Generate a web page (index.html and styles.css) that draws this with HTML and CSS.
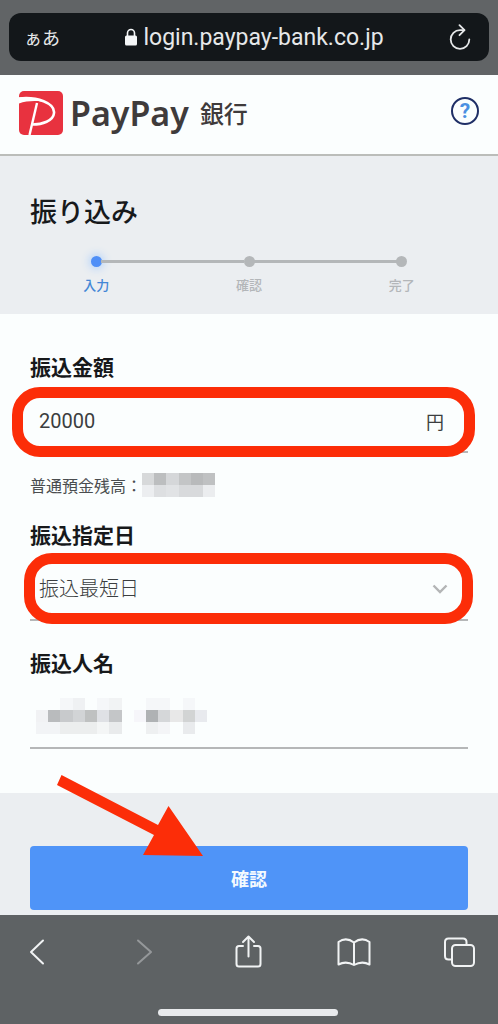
FILE: index.html
```html
<!DOCTYPE html>
<html lang="ja">
  <head>
    <meta charset="UTF-8" />
    <meta name="viewport" content="width=device-width, initial-scale=1.0" />
    <title>振り込み</title>
    <link rel="stylesheet" href="styles.css">
  </head>
  <body>
    <div class="browser-top">
      <div class="address-bar">
        <button type="button" class="text-size">ぁあ</button>
        <div class="url">
          <svg width="12" height="18" viewBox="0 0 12 18">
            <path d="M2.5 8V5a3.5 3.5 0 0 1 7 0v3" fill="none" stroke="#f4f6f7" stroke-width="1.6" />
            <rect x="0" y="7.5" width="12" height="10" rx="1.5" fill="#f4f6f7" />
          </svg>
          <span>login.paypay-bank.co.jp</span>
        </div>
        <button type="button" class="reload" aria-label="再読み込み">
          <svg width="22" height="26" viewBox="0 0 22 26" fill="none" stroke="#e6e8e9" stroke-width="1.8" stroke-linecap="round" stroke-linejoin="round">
            <path d="M15 6.2H11A9.300 9.300 0 1 0 20.300 15.500" />
            <path d="M10.500 1.200L15.500 6.200L10.500 11.200" />
          </svg>
        </button>
      </div>
    </div>

    <header class="header">
      <div class="logo">
        <svg width="44" height="44" viewBox="0 0 44 44">
          <rect width="44" height="44" rx="5" fill="#e8323f" />
          <path d="M0 7.500C18 5.500 36 12 35 22C34.500 30 23 33.500 13.500 33.500" fill="none" stroke="#fff" stroke-width="2.600" />
          <path d="M0 6.500C9 5.500 17 7 23 10.500C15 9.500 7 10 0 12.500Z" fill="#fff" />
          <path d="M18 12L10.500 44" fill="none" stroke="#fff" stroke-width="2.400" />
        </svg>
        <span class="logo-name">PayPay</span>
        <span class="logo-bank">銀行</span>
      </div>
      <button type="button" class="help" aria-label="ヘルプ">?</button>
    </header>

    <section class="hero">
      <h1>振り込み</h1>
      <ol class="steps">
        <li class="active">入力</li>
        <li>確認</li>
        <li>完了</li>
      </ol>
    </section>

    <form class="form">
      <div class="form-body">
        <label for="amount">振込金額</label>
        <div class="field">
          <input type="text" id="amount" value="20000" />
          <span class="unit">円</span>
          <span class="mark mark-amount"></span>
        </div>
        <p class="balance">
          普通預金残高：
          <svg width="73" height="24" viewBox="0 0 6 2" preserveAspectRatio="none" shape-rendering="crispEdges">
            <rect x="0" width="1" height="1" fill="#d7d9da" />
            <rect x="1" width="1" height="1" fill="#bcbebf" />
            <rect x="2" width="1" height="1" fill="#d5d7d9" />
            <rect x="3" width="1" height="1" fill="#c3c5c6" />
            <rect x="4" width="1" height="1" fill="#b8babb" />
            <rect x="5" width="1" height="1" fill="#bfc1c2" />
            <rect x="0" y="1" width="1" height="1" fill="#eceef0" />
            <rect x="1" y="1" width="1" height="1" fill="#dddfe1" />
            <rect x="2" y="1" width="1" height="1" fill="#e1e3e5" />
            <rect x="3" y="1" width="2" height="1" fill="#d8dadc" />
            <rect x="5" y="1" width="1" height="1" fill="#ebedef" />
          </svg>
        </p>

        <label for="date">振込指定日</label>
        <div class="field">
          <select id="date">
            <option>振込最短日</option>
          </select>
          <svg class="chevron" width="16" height="10" viewBox="0 0 16 10">
            <path d="M1.500 1.500L8 8L14.500 1.500" fill="none" stroke="#b3b5b6" stroke-width="2.400" />
          </svg>
          <span class="mark mark-date"></span>
        </div>

        <label for="name" class="label-name">振込人名</label>
        <div class="field">
          <input type="text" id="name" readonly />
          <!-- masked name -->
          <svg class="masked" width="171" height="36" viewBox="0 0 14 3" preserveAspectRatio="none" shape-rendering="crispEdges">
            <g fill="#f5f7f9">
              <rect x="2" width="1" height="1" />
              <rect x="3" width="1" height="1" fill="#eff1f3" />
              <rect x="5" width="1" height="1" />
              <rect x="6" width="1" height="1" fill="#f1f3f4" />
              <rect x="9" width="2" height="1" />
              <rect x="12" width="1" height="1" />
            </g>
            <rect x="0" y="1" width="1" height="1" fill="#f1f2f4" />
            <rect x="1" y="1" width="1" height="1" fill="#b9bbbd" />
            <rect x="2" y="1" width="1" height="1" fill="#c8cacc" />
            <rect x="3" y="1" width="1" height="1" fill="#d2d4d6" />
            <rect x="4" y="1" width="1" height="1" fill="#bfc1c1" />
            <rect x="5" y="1" width="1" height="1" fill="#dfe1e5" />
            <rect x="6" y="1" width="1" height="1" fill="#c4c6c8" />
            <rect x="8" y="1" width="1" height="1" fill="#f6f6fa" />
            <rect x="9" y="1" width="1" height="1" fill="#afb2b4" />
            <rect x="10" y="1" width="1" height="1" fill="#d5d7d9" />
            <rect x="11" y="1" width="1" height="1" fill="#e8e8e8" />
            <rect x="12" y="1" width="1" height="1" fill="#d2d4d4" />
            <rect x="13" y="1" width="1" height="1" fill="#e8eaee" />
            <rect x="0" y="2" width="2" height="1" fill="#f2f4f6" />
            <rect x="2" y="2" width="3" height="1" fill="#eceeee" />
            <rect x="5" y="2" width="1" height="1" fill="#f4f6f6" />
            <rect x="6" y="2" width="1" height="1" fill="#e9ebec" />
            <rect x="9" y="2" width="1" height="1" fill="#eef0f1" />
            <rect x="10" y="2" width="1" height="1" fill="#f4f5f7" />
            <rect x="12" y="2" width="1" height="1" fill="#e9ebed" />
          </svg>
        </div>
      </div>

      <div class="actions">
        <button type="button" class="submit">確認</button>
        <svg class="arrow" width="148" height="84" viewBox="0 0 148 84">
          <path d="M5.500 1L102 51L112.500 32L147 82L87 81L98 61L1 11Z" fill="#fc2d08" />
        </svg>
      </div>
    </form>

    <nav class="toolbar">
      <div class="toolbar-buttons">
        <button type="button" aria-label="戻る">
          <svg width="34" height="34" viewBox="0 0 34 34">
            <path d="M23 5.500L11 17L23 28.500" />
          </svg>
        </button>
        <button type="button" aria-label="進む" disabled>
          <svg width="34" height="34" viewBox="0 0 34 34">
            <path d="M12 5.500L25 17L12 28.500" />
          </svg>
        </button>
        <button type="button" aria-label="共有">
          <svg width="34" height="34" viewBox="0 0 34 34">
            <path d="M12 11H8Q5.500 11 5.500 13.500V29Q5.500 31.500 8 31.500H27Q29.500 31.500 29.500 29V13.500Q29.500 11 27 11H23" />
            <path d="M17.500 21.500V1.500M12 7L17.500 1.500L23 7" />
          </svg>
        </button>
        <button type="button" aria-label="ブックマーク">
          <svg width="34" height="34" viewBox="0 0 34 34">
            <path d="M17 7.500Q9 1.500 1.500 7V29.500Q9 25.500 17 30Q25 25.500 32.500 29.500V7Q25 1.500 17 7.500V30" />
          </svg>
        </button>
        <button type="button" aria-label="タブ">
          <svg width="34" height="34" viewBox="0 0 34 34">
            <rect x="10" y="10" width="22" height="21" rx="3.500" />
            <path d="M10 24.500H6.500Q3 24.500 3 21V7Q3 3.500 6.500 3.500H21Q24.500 3.500 24.500 7V10" />
          </svg>
        </button>
      </div>
      <div class="home-bar"></div>
    </nav>
  </body>
</html>
```

FILE: styles.css
```css
* {
  box-sizing: border-box;
}

body {
  margin: 0;
  min-height: 100vh;
  display: flex;
  flex-direction: column;
  font-family: "Noto Sans CJK JP", sans-serif;
  background-color: #fbfefe;
  color: #17191b;
}

button {
  padding: 0;
  border: none;
  background: none;
  font-family: inherit;
  cursor: pointer;
}

svg {
  display: block;
}

/* address bar */
.browser-top {
  padding: 13px 9px 14px;
  background-color: #616466;
}

.address-bar {
  display: flex;
  align-items: center;
  justify-content: space-between;
  height: 48px;
  padding: 0 18px 0 15px;
  border-radius: 12px;
  background-color: #13171a;
}

.text-size {
  color: #e6e8e9;
  font-size: 18px;
}

.url {
  display: flex;
  align-items: center;
  gap: 6px;
  color: #e6e8e9;
  font-family: Roboto, "Noto Sans CJK JP", sans-serif;
  font-size: 23px;
}

/* site header */
.header {
  display: flex;
  align-items: center;
  justify-content: space-between;
  height: 81px;
  padding: 0 19px 4px;
  border-bottom: 2px solid #bbbdba;
}

.logo {
  display: flex;
  align-items: center;
  color: #3f3b3b;
}

.logo-name {
  margin-left: 7px;
  font-family: "Noto Sans", sans-serif;
  font-size: 34px;
  font-weight: 600;
  line-height: 44px;
}

.logo-bank {
  margin-left: 11px;
  font-size: 24px;
  font-weight: 500;
  line-height: 44px;
}

.help {
  width: 28px;
  height: 28px;
  margin-bottom: 4px;
  border: 2px solid #1f2f66;
  border-radius: 50%;
  color: #4b90e2;
  font-family: Roboto, sans-serif;
  font-size: 21px;
  font-weight: bold;
  line-height: 24px;
}

/* title and steps */
.hero {
  padding: 35px 0 19px;
  background-color: #ebeef1;
}

h1 {
  margin: 0 30px 25px;
  font-size: 27px;
  font-weight: 500;
  line-height: 40px;
}

.steps {
  display: flex;
  margin: 0;
  padding: 0 20px;
  list-style: none;
}

.steps li {
  position: relative;
  flex: 1;
  color: #b3b6b9;
  font-size: 13px;
  font-weight: 500;
  line-height: 20px;
  text-align: center;
}

.steps li::before {
  content: "";
  display: block;
  width: 11px;
  height: 11px;
  margin: 0 auto 8px;
  border-radius: 50%;
  background-color: #b4b7b9;
}

.steps li:not(:last-child)::after {
  content: "";
  position: absolute;
  top: 4px;
  left: calc(50% + 5px);
  width: calc(100% - 10px);
  height: 3px;
  background-color: #b4b7b9;
}

.steps .active {
  color: #4387d6;
}

.steps .active::before {
  background-color: #4f8ff7;
  box-shadow: 0 0 8px 2px #b5d3fa;
}

/* form */
.form-body {
  padding: 37px 30px 44px;
}

label {
  display: block;
  margin-bottom: 9px;
  font-size: 21px;
  font-weight: bold;
  line-height: 30px;
}

.label-name {
  margin-top: 26px;
}

.field {
  position: relative;
  display: flex;
  align-items: center;
  height: 63px;
  padding: 0 24px 0 9px;
  border-bottom: 2px solid #b5b7b8;
}

.field input,
.field select {
  flex: 1;
  min-width: 0;
  height: 100%;
  padding: 0;
  border: none;
  outline: none;
  background: none;
  appearance: none;
  color: #3b3e40;
  font-family: Roboto, "Noto Sans CJK JP", sans-serif;
  font-size: 20px;
}

.field select {
  font-weight: 300;
}

.unit {
  color: #3b3e40;
  font-size: 18px;
  line-height: 24px;
}

.chevron {
  margin-right: -4px;
}

.masked {
  position: absolute;
  top: 12px;
  left: 6px;
}

.balance {
  display: flex;
  margin: 20px 0 22px;
  color: #4a4d4f;
  font-size: 16px;
  line-height: 24px;
}

/* red marker frames */
.mark {
  position: absolute;
  border: 11px solid #fc2d08;
  border-radius: 28px;
  pointer-events: none;
}

.mark-amount {
  inset: -3px -7px -6px -18px;
}

.mark-date {
  inset: -5px -5px -5px -6px;
}

.actions {
  position: relative;
  padding: 53px 30px 5px;
  background-color: #ebeef1;
}

.submit {
  display: block;
  width: 100%;
  height: 64px;
  border-radius: 4px;
  background-color: #4f94f8;
  color: #f4fafe;
  font-size: 18px;
  font-weight: bold;
}

.arrow {
  position: absolute;
  top: -19px;
  left: 56px;
  pointer-events: none;
}

/* bottom toolbar */
.toolbar {
  flex: 1;
  display: flex;
  flex-direction: column;
  justify-content: space-between;
  min-height: 109px;
  padding: 20px 22px 8px 20px;
  background-color: #5e6264;
}

.toolbar-buttons {
  display: flex;
  justify-content: space-between;
}

.toolbar svg {
  fill: none;
  stroke: #f1f3f4;
  stroke-width: 2;
  stroke-linejoin: round;
  stroke-linecap: round;
}

.toolbar button:disabled svg {
  stroke: #95989a;
}

.home-bar {
  width: 180px;
  height: 7px;
  margin: 0 auto;
  border-radius: 4px;
  background-color: #e8eaec;
}
```
